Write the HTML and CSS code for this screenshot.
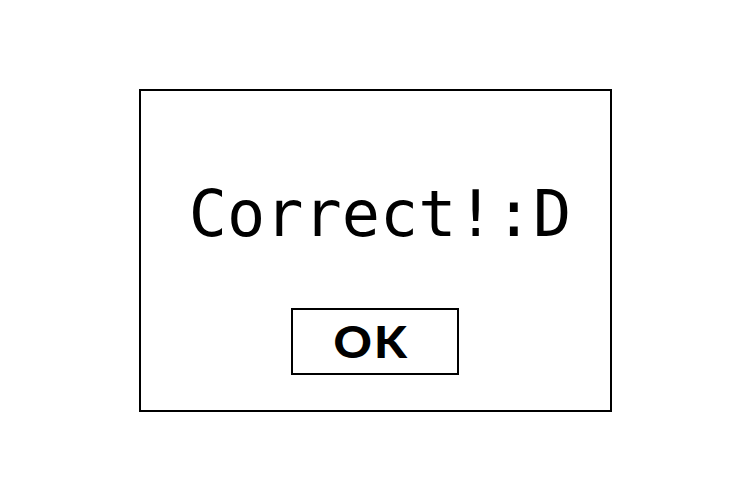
FILE: index.html
```html
<!DOCTYPE html>
<html>
<head>
<meta charset="utf-8">
<link rel="stylesheet" href="styles.css">
</head>
<body>
<div class="dialog">
  <div class="message">Correct!:D</div>
  <button class="ok"><span class="ok-label">OK</span></button>
</div>
</body>
</html>
```
FILE: styles.css
```css
html, body {
  margin: 0;
  padding: 0;
  background: #fff;
}
body {
  width: 750px;
  height: 500px;
  display: flex;
  align-items: center;
  justify-content: center;
}
.dialog {
  box-sizing: border-box;
  width: 473px;
  height: 323px;
  border: 2px solid #000;
  display: flex;
  flex-direction: column;
  align-items: center;
  padding-top: 92px;
}
.message {
  font-family: "DejaVu Sans Mono", monospace;
  font-size: 63.5px;
  line-height: 63px;
  color: #000;
  white-space: nowrap;
  padding-left: 10px;
}
.ok {
  box-sizing: border-box;
  margin-top: 62px;
  width: 168px;
  height: 67px;
  border: 2px solid #000;
  background: #fff;
  padding: 0 8px 0 0;
  display: flex;
  align-items: center;
  justify-content: center;
  font-family: Lato, sans-serif;
  font-weight: 900;
  font-size: 43px;
  color: #000;
}
.ok-label {
  display: inline-block;
  letter-spacing: 2px;
  transform: scaleX(1.1);
}
```
